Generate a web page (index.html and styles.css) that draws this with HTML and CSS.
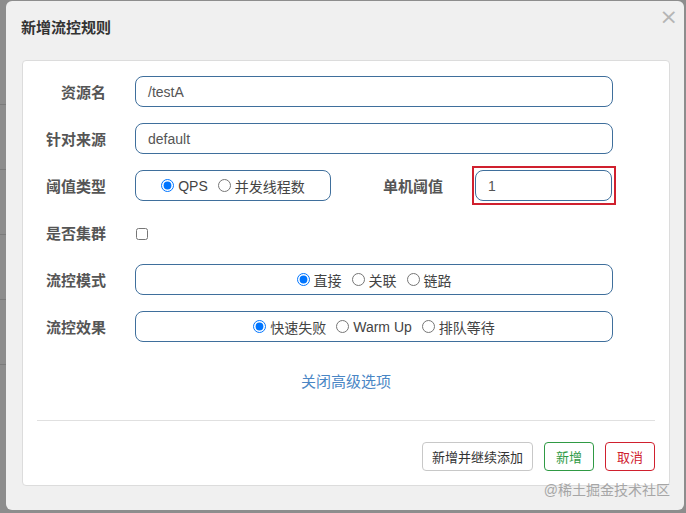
FILE: index.html
```html
<html>

<head>
  <title>新增流控规则</title>
  <meta charset="UTF-8">
  <link rel="stylesheet" href="styles.css">
</head>

<body>
  <div class="backdrop">
    <div class="bg-lines">
      <div></div><div></div><div></div><div></div><div></div>
    </div>

    <div class="dialog">
      <div class="dialog-header">
        <h3>新增流控规则</h3>
        <span class="close">×</span>
      </div>

      <div class="panel">
        <div class="form-row">
          <label class="form-label">资源名</label>
          <div class="field wide"><span class="val">/testA</span></div>
        </div>
        <div class="form-row">
          <label class="form-label">针对来源</label>
          <div class="field wide"><span class="val">default</span></div>
        </div>
        <div class="form-row">
          <label class="form-label">阈值类型</label>
          <div class="field radios small">
            <label><input type="radio" name="grade" checked>QPS</label>
            <label><input type="radio" name="grade">并发线程数</label>
          </div>
          <label class="form-label sub">单机阈值</label>
          <div class="highlight">
            <div class="field count"><span class="val">1</span></div>
          </div>
        </div>
        <div class="form-row">
          <label class="form-label">是否集群</label>
          <input class="check" type="checkbox">
        </div>
        <div class="form-row">
          <label class="form-label">流控模式</label>
          <div class="field wide radios">
            <label><input type="radio" name="mode" checked>直接</label>
            <label><input type="radio" name="mode">关联</label>
            <label><input type="radio" name="mode">链路</label>
          </div>
        </div>
        <div class="form-row">
          <label class="form-label">流控效果</label>
          <div class="field wide radios">
            <label><input type="radio" name="effect" checked>快速失败</label>
            <label><input type="radio" name="effect">Warm Up</label>
            <label><input type="radio" name="effect">排队等待</label>
          </div>
        </div>

        <div class="advanced"><a href="#">关闭高级选项</a></div>

        <div class="divider"></div>

        <div class="footer">
          <button class="btn more">新增并继续添加</button>
          <button class="btn ok">新增</button>
          <button class="btn cancel">取消</button>
        </div>
      </div>

      <div class="watermark">@稀土掘金技术社区</div>
    </div>
  </div>
</body>

</html>
```

FILE: styles.css
```css
body {
  margin: 0;
  padding: 0;
  font-family: "Microsoft YaHei", "Liberation Sans", "Noto Sans CJK SC", sans-serif;
  background-color: #8d8d8d;
  color: #555;
  font-size: 14px;
}

.backdrop {
  display: flex;
  width: 686px;
  height: 513px;
  overflow: hidden;
}

/* 背景页面的残影 */
.bg-lines {
  width: 6px;
  display: flex;
  flex-direction: column;
  padding-top: 40px;
}

.bg-lines div {
  height: 64px;
  border-bottom: 1px solid #7b7b7b;
}

/** 弹窗 */
.dialog {
  margin-top: 1px;
  width: 678px;
  height: 509px;
  background-color: #f0f0f0;
  border-radius: 6px;
  box-sizing: border-box;
  padding: 0 14px 0 16px;
  display: flex;
  flex-direction: column;
}

.dialog-header {
  height: 59px;
  display: flex;
  align-items: flex-start;
  justify-content: space-between;
}

.dialog-header h3 {
  margin: 15px 0 0 -1px;
  font-size: 15px;
  font-weight: bold;
  color: #333;
}

.close {
  margin-top: 3px;
  margin-right: -8px;
  font-size: 22px;
  color: #b5b5b5;
  font-family: "DejaVu Sans", sans-serif;
}

.panel {
  background-color: #fff;
  border: 1px solid #dcdcdc;
  border-radius: 4px;
  height: 426px;
  box-sizing: border-box;
  padding: 15px 0 0 0;
  display: flex;
  flex-direction: column;
  gap: 16px;
}

.form-row {
  display: flex;
  align-items: center;
  height: 31px;
}

.form-label {
  width: 83px;
  text-align: right;
  font-weight: bold;
  color: #555;
  font-size: 15px;
  margin-right: 29px;
  flex-shrink: 0;
}

.form-label.sub {
  width: 112px;
  margin-right: 0;
}

.field {
  height: 31px;
  box-sizing: border-box;
  border: 1px solid #3f6f9c;
  border-radius: 8px;
  display: flex;
  align-items: center;
  color: #555;
}

.field .val {
  padding-left: 12px;
}

.wide {
  width: 478px;
}

.small {
  width: 196px;
}

.count {
  width: 137px;
}

.highlight {
  margin-left: 29px;
  border: 2px solid #d0202e;
  padding: 2px 2px 2px 1px;
}

.radios {
  justify-content: center;
  gap: 10px;
}

.radios label {
  display: flex;
  align-items: center;
  color: #444;
}

.radios input {
  margin: 0 4px 0 0;
  width: 13px;
  height: 13px;
}

.check {
  margin: 2px 0 0 1px;
  width: 12px;
  height: 12px;
}

.advanced {
  text-align: center;
  margin-top: 12px;
  height: 34px;
}

.advanced a {
  color: #4a86c5;
  text-decoration: none;
  font-size: 15px;
}

.divider {
  margin: 0 14px;
  border-top: 1px solid #e0e0e0;
}

.footer {
  display: flex;
  justify-content: flex-end;
  gap: 11px;
  padding-right: 14px;
  margin-top: 5px;
}

/* 按钮 */
.btn {
  height: 29px;
  padding: 0 11px;
  font-size: 13px;
  font-family: inherit;
  background-color: #fff;
  border: 1px solid #c8c8c8;
  border-radius: 4px;
  color: #333;
  cursor: pointer;
}

.btn.more {
  padding: 0 9px;
}

.btn.ok {
  border-color: #2f9a44;
  color: #2f9a44;
}

.btn.cancel {
  border-color: #d0202e;
  color: #d0202e;
}

.watermark {
  align-self: flex-end;
  margin-top: -7px;
  margin-right: 0;
  font-size: 14px;
  color: #a6a6a6;
}
```
